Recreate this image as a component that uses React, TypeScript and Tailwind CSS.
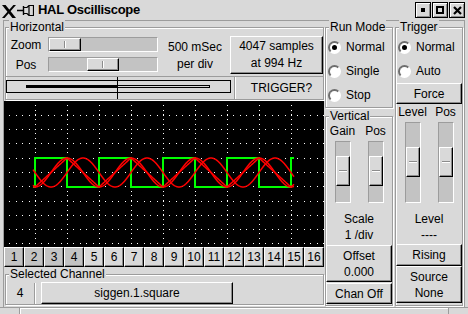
import React from 'react';

const raised =
  'border border-t-white border-l-white border-r-black border-b-black shadow-[inset_-1px_-1px_0_#8c8c8c]';
const groove = 'border border-[#9c9c9c] shadow-[inset_1px_1px_0_#ffffff,1px_1px_0_#ffffff]';
const trough = 'bg-[#c3c3c3] border border-t-[#9c9c9c] border-l-[#9c9c9c] border-r-white border-b-white';

function Group({
  label,
  className = '',
  children,
}: {
  label: string;
  className?: string;
  children?: React.ReactNode;
}) {
  return (
    <div className={`relative ${groove} ${className}`}>
      <span className="absolute left-[3px] top-[-8px] whitespace-nowrap bg-[#d9d9d9] px-[1px] leading-[14px]">
        {label}
      </span>
      {children}
    </div>
  );
}

function Btn({ className = '', children }: { className?: string; children?: React.ReactNode }) {
  return (
    <div
      className={`flex flex-col items-center justify-center text-center leading-[16px] ${raised} ${className}`}
    >
      {children}
    </div>
  );
}

function Radio({ label, on = false }: { label: string; on?: boolean }) {
  return (
    <div className="flex h-[24px] items-center">
      <span className="ml-[2px] flex h-[13px] w-[13px] items-center justify-center rounded-full border-2 border-t-[#6e6e6e] border-l-[#6e6e6e] border-r-white border-b-white bg-white">
        {on && <span className="h-[5px] w-[5px] rounded-full bg-black" />}
      </span>
      <span className="ml-[5px]">{label}</span>
    </div>
  );
}

function HSlider({ label, at, className = '' }: { label: string; at: number; className?: string }) {
  return (
    <div className={`flex h-[15px] items-center ${className}`}>
      <span className="w-[40px] text-center">{label}</span>
      <div className={`ml-[2px] flex h-[15px] w-[110px] ${trough}`}>
        <div
          className={`flex h-[13px] w-[32px] justify-center bg-[#d9d9d9] ${raised} ${at === 0 ? 'ml-0' : 'ml-[38px]'}`}
        >
          <div className="my-[2px] w-[2px] border-l border-l-[#8c8c8c] border-r border-r-white" />
        </div>
      </div>
    </div>
  );
}

function VSlider({ height, handleTop }: { height: string; handleTop: string }) {
  return (
    <div className={`flex w-[16px] flex-col ${trough} ${height}`}>
      <div className={`flex h-[30px] w-[14px] flex-col justify-center bg-[#d9d9d9] ${raised} ${handleTop}`}>
        <div className="mx-[2px] h-[2px] border-t border-t-[#8c8c8c] border-b border-b-white" />
      </div>
    </div>
  );
}

// scope grid + traces
const hLines = [14, 28, 42, 57, 71, 85, 100, 114, 128, 142];
const vLines = [31, 63, 95, 127, 159, 191, 223, 255, 287];

function gridPath() {
  let d = '';
  hLines.forEach((y) => {
    for (let j = 1; j < 51; j++) {
      const x = Math.round(-1 + 6.4 * j);
      if (x < 320) d += `M${x} ${y}h1v1h-1z`;
    }
  });
  vLines.forEach((x) => {
    for (let j = 1; j < 31; j++) {
      const y = Math.round(-1 + (143 / 30) * j);
      if (!hLines.includes(y)) d += `M${x} ${y}h1v1h-1z`;
    }
  });
  return d;
}

function trace(fn: (p: number) => number) {
  const c = 71.5;
  const a = 14.5;
  const pts: string[] = [];
  for (let x = 33; x <= 294; x += 0.5) {
    let p = (x - 35) / 64;
    p = p - Math.floor(p);
    pts.push(`${(x - 4).toFixed(1)},${(c - a * fn(p)).toFixed(2)}`);
  }
  return pts.join(' ');
}

const tri = (p: number) => (p < 0.5 ? -1 + 4 * p : 3 - 4 * p);
const cosw = (p: number) => -Math.cos(2 * Math.PI * p);
const sinw = (p: number) => -Math.sin(2 * Math.PI * p);

const square =
  '29,86 31,86 31,57 63,57 63,86 95,86 95,57 127,57 127,86 159,86 159,57 191,57 191,86 223,86 223,57 255,57 255,86 287,86 287,57 290,57';

function Scope() {
  return (
    <div className="mt-[1px] h-[146px] w-[320px] bg-black">
      <svg width="320" height="146" viewBox="0 0 320 146" className="block">
        <path d={gridPath()} fill="#ffffff" shapeRendering="crispEdges" />
        <polyline points={square} fill="none" stroke="#00ff00" strokeWidth="2" />
        <polyline points={trace(tri)} fill="none" stroke="#ff0000" strokeWidth="1.5" />
        <polyline points={trace(cosw)} fill="none" stroke="#ff0000" strokeWidth="1.5" />
        <polyline points={trace(sinw)} fill="none" stroke="#ff0000" strokeWidth="1.5" />
      </svg>
    </div>
  );
}

function TitleBar() {
  return (
    <div className="flex h-[20px] items-center">
      <svg width="14" height="13" viewBox="0 0 14 13" className="ml-[2px] mt-[3px]">
        <polygon points="0,0 3.6,0 14,13 10.4,13" fill="#000" />
        <polygon points="11.4,0 14,0 2.6,13 0,13" fill="#000" />
      </svg>
      <svg width="17" height="11" viewBox="0 0 17 11" className="ml-[1px] mt-[1px]">
        <path d="M0 5.5h6.5M6.5 1v9" stroke="#000" strokeWidth="1.4" fill="none" />
        <path
          d="M7 2.5h3l2-2h4.5v10H12l-2-2H7M12 0.5v10"
          stroke="#000"
          strokeWidth="1.2"
          fill="none"
        />
      </svg>
      <span className="ml-[4px] text-[13px] font-bold tracking-[-0.3px]">HAL Oscilliscope</span>
      <div className="ml-auto mr-[3px] flex gap-[1px]">
        <div className="flex h-[16px] w-[16px] items-center justify-center border border-black shadow-[inset_1px_1px_0_#fff,inset_-1px_-1px_0_#8c8c8c]">
          <div className="h-[4px] w-[4px] bg-black" />
        </div>
        <div className="flex h-[16px] w-[16px] items-center justify-center border border-black shadow-[inset_1px_1px_0_#fff,inset_-1px_-1px_0_#8c8c8c]">
          <div className="h-[8px] w-[8px] border-2 border-black" />
        </div>
        <div className="flex h-[16px] w-[16px] items-center justify-center border border-black shadow-[inset_1px_1px_0_#fff,inset_-1px_-1px_0_#8c8c8c]">
          <svg width="9" height="9" viewBox="0 0 9 9">
            <path d="M1 1l7 7M8 1l-7 7" stroke="#000" strokeWidth="2.2" />
          </svg>
        </div>
      </div>
    </div>
  );
}

function LeftColumn() {
  return (
    <div className="flex w-[321px] flex-col">
      <Group label="Horizontal" className="ml-[1px] mt-[6px] h-[73px] w-[319px] pt-[8px]">
        <div className="flex items-start">
          <div className="flex flex-col">
            <HSlider label="Zoom" at={0} className="mt-[1px]" />
            <HSlider label="Pos" at={38} className="mt-[5px]" />
          </div>
          <div className="ml-[2px] mt-[3px] w-[70px] text-center leading-[17px]">
            500 mSec
            <br />
            per div
          </div>
          <Btn className="h-[38px] w-[93px] !leading-[17px]">
            <span>4047 samples</span>
            <span>at 994 Hz</span>
          </Btn>
        </div>
        <div className="mt-[2px] flex h-[23px] border-t border-t-[#9c9c9c]">
          <svg width="228" height="22" viewBox="0 0 228 22" className="block">
            <rect x="0.5" y="3.5" width="224" height="12" fill="none" stroke="#000" />
            <rect x="20" y="8" width="92" height="3" fill="#000" />
            <rect x="20.5" y="8.5" width="183" height="2" fill="none" stroke="#000" />
            <line x1="111.5" y1="0" x2="111.5" y2="22" stroke="#000" />
          </svg>
          <div className="w-[2px] border-l border-l-[#9c9c9c] border-r border-r-white" />
          <div className="flex flex-1 items-center justify-center pl-[4px]">TRIGGER?</div>
        </div>
      </Group>
      <Scope />
      <div className="flex h-[20px]">
        {Array.from({ length: 16 }, (_, i) => (
          <Btn key={i} className={`h-[20px] w-[20px] ${i < 4 ? 'bg-[#c3c3c3]' : 'bg-[#d9d9d9]'}`}>
            {i + 1}
          </Btn>
        ))}
      </div>
      <Group label="Selected Channel" className="ml-[1px] mt-[7px] flex h-[31px] w-[319px] items-start pt-[7px]">
        <div className="flex h-[22px] w-[28px] items-center justify-center">4</div>
        <div className="mt-[1px] h-[21px] w-[2px] border-l border-l-[#9c9c9c] border-r border-r-white" />
        <Btn className="ml-[5px] h-[22px] w-[192px]">siggen.1.square</Btn>
      </Group>
    </div>
  );
}

function ColumnA() {
  return (
    <div className="flex w-[69px] flex-col">
      <Group label="Run Mode" className="mt-[6px] h-[81px] w-[68px] pt-[7px]">
        <Radio on label="Normal" />
        <Radio label="Single" />
        <Radio label="Stop" />
      </Group>
      <Group label="Vertical" className="mt-[8px] flex h-[190px] w-[68px] flex-col pt-[7px]">
        <div className="grid grid-cols-2 text-center">
          <span>Gain</span>
          <span>Pos</span>
        </div>
        <div className="mt-[3px] grid grid-cols-2 justify-items-center">
          <VSlider height="h-[62px]" handleTop="mt-[14px]" />
          <VSlider height="h-[62px]" handleTop="mt-[14px]" />
        </div>
        <div className="mt-[8px] text-center leading-[16px]">
          Scale
          <br />1 /div
        </div>
        <Btn className="mt-[2px] h-[37px] w-full">
          <span>Offset</span>
          <span>0.000</span>
        </Btn>
        <Btn className="mt-[1px] h-[21px] w-full">Chan Off</Btn>
      </Group>
    </div>
  );
}

function ColumnB() {
  return (
    <div className="flex w-[70px] flex-col">
      <Group label="Trigger" className="ml-[1px] mt-[6px] flex h-[279px] w-[68px] flex-col pt-[7px]">
        <Radio on label="Normal" />
        <Radio label="Auto" />
        <Btn className="h-[21px] w-full">Force</Btn>
        <div className="mt-[1px] grid grid-cols-2 text-center">
          <span>Level</span>
          <span>Pos</span>
        </div>
        <div className="mt-[3px] grid grid-cols-2 justify-items-center">
          <VSlider height="h-[81px]" handleTop="mt-[24px]" />
          <VSlider height="h-[81px]" handleTop="mt-[24px]" />
        </div>
        <div className="mt-[8px] text-center leading-[16px]">
          Level
          <br />
          ----
        </div>
        <Btn className="mt-[1px] h-[22px] w-full">Rising</Btn>
        <Btn className="h-[37px] w-full">
          <span>Source</span>
          <span>None</span>
        </Btn>
      </Group>
    </div>
  );
}

export default function App() {
  return (
    <div className="flex h-[314px] w-[468px] flex-col overflow-hidden bg-[#d9d9d9] font-['Liberation_Sans',Arial,sans-serif] text-[12px] leading-[14px] text-black">
      <TitleBar />
      <div className="mx-[3px] flex h-[287px] border-x border-t border-[#9c9c9c]">
        <LeftColumn />
        <ColumnA />
        <ColumnB />
      </div>
      <div className="flex h-[7px] border-t border-t-[#9c9c9c]">
        <div className="w-[20px] border-r border-r-[#9c9c9c]" />
        <div className="flex-1 border-l border-t border-white" />
        <div className="w-[20px] border-l border-l-[#9c9c9c]" />
      </div>
    </div>
  );
}
